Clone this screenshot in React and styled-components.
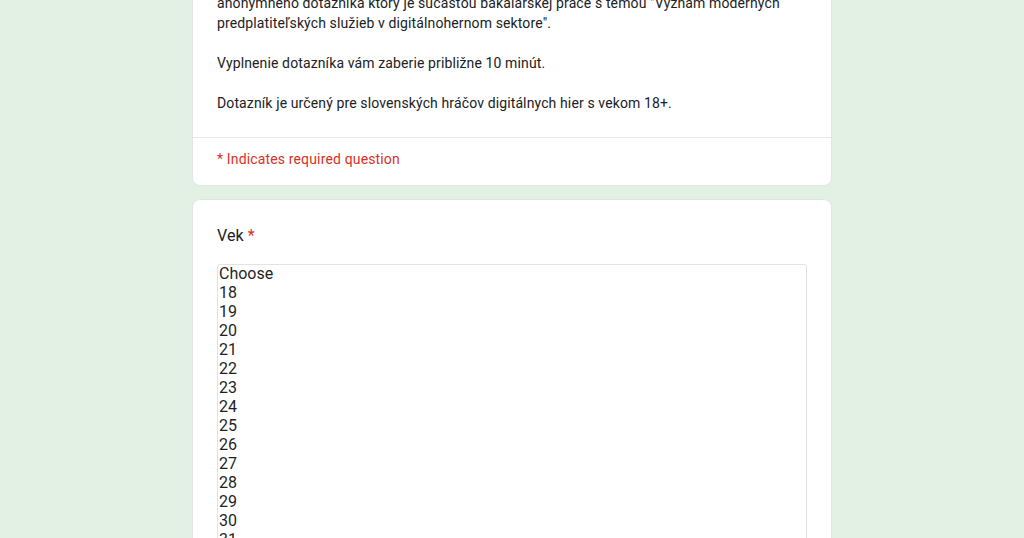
import React from 'react'
import styled, { createGlobalStyle } from 'styled-components'

const GlobalStyle = createGlobalStyle`
  html, body {
    margin: 0;
    padding: 0;
    background-color: #e3f0e4;
    font-family: Roboto, 'Liberation Sans', Arial, sans-serif;
    overflow: hidden;
  }
`

const Page = styled.div`
  width: 640px;
  margin: 0 auto;
  display: flex;
  flex-direction: column;
  gap: 13px;
`

const Card = styled.div`
  background-color: #fff;
  border: 1px solid #e2e6e2;
  border-radius: 8px;
  box-sizing: border-box;
  ${props => props.$cut && `
    border-top: 0;
    border-top-left-radius: 0;
    border-top-right-radius: 0;
  `}
`

const Description = styled.div`
  padding: 0 24px 24px;
  margin-top: -7px;
  font-size: 14px;
  line-height: 20px;
  color: #202124;
  letter-spacing: 0.12px;

  p {
    margin: 0 0 20px;
  }

  p:last-child {
    margin-bottom: 0;
  }
`

const Required = styled.div`
  border-top: 1px solid #e6e7ea;
  padding: 11px 24px 16px;
  font-size: 14px;
  line-height: 20px;
  color: #d93025;
  letter-spacing: 0.15px;
`

const Question = styled.div`
  padding: 24px 24px 0;
  height: 360px;
`

const QuestionTitle = styled.div`
  font-size: 16px;
  line-height: 24px;
  color: #202124;
  letter-spacing: 0.1px;

  span {
    color: #d93025;
  }
`

const ListBox = styled.div`
  margin-top: 16px;
  border: 1px solid #e3e3e3;
  border-radius: 3px;
  height: 320px;
  overflow: hidden;
`

const Option = styled.div`
  height: 19px;
  line-height: 17px;
  padding: 0 1px;
  font-size: 16px;
  color: #1f1f1f;
  white-space: nowrap;
`

const ages = ['Choose']
for (let i = 18; i <= 40; i++) ages.push(String(i))

export default function App () {
  return (
    <>
      <GlobalStyle />
      <Page>
        <Card $cut>
          <Description>
            <p>
              anonymného dotazníka ktorý je súčasťou bakalárskej práce s témou "Význam moderných predplatiteľských služieb v digitálnohernom sektore".
            </p>
            <p>Vyplnenie dotazníka vám zaberie približne 10 minút.</p>
            <p>Dotazník je určený pre slovenských hráčov digitálnych hier s vekom 18+.</p>
          </Description>
          <Required>* Indicates required question</Required>
        </Card>
        <Card>
          <Question>
            <QuestionTitle>Vek <span>*</span></QuestionTitle>
            <ListBox role="listbox">
              {ages.map(a => <Option key={a} role="option">{a}</Option>)}
            </ListBox>
          </Question>
        </Card>
      </Page>
    </>
  )
}
